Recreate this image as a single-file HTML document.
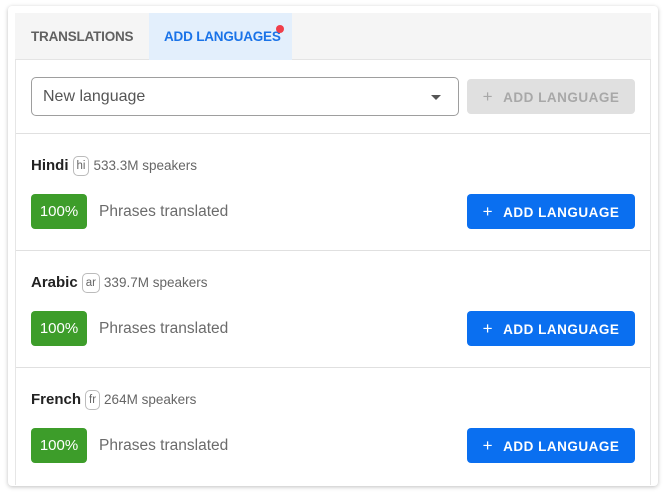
<!DOCTYPE html>
<html><head><style>
*{box-sizing:border-box;margin:0;padding:0}
body{width:666px;height:495px;background:#fff;font-family:"Liberation Sans",sans-serif;position:relative;overflow:hidden}
.card{position:absolute;left:8px;top:6px;width:650px;height:480px;background:#fff;border-radius:4px;box-shadow:0 1px 4px rgba(0,0,0,.25)}
.inner{position:absolute;left:15px;top:13px;width:636px;height:472px;border-left:1px solid #e6e6e6;border-right:1px solid #e6e6e6}
.tabs{position:absolute;left:-1px;top:0;width:636px;height:47px;background:#f5f5f5;border-bottom:1px solid #e4e4e4}
.tab{position:absolute;top:0;height:47px;line-height:47px;font-size:13.5px;font-weight:bold;letter-spacing:-.2px}
.t1{left:16px;color:#616161}
.t2{left:134px;width:143px;background:#e3effc;color:#1a73e8;padding-left:15px}
.dot{position:absolute;left:261px;top:12px;width:8px;height:8px;border-radius:50%;background:#f03e4a}
.sel{position:absolute;left:15px;top:64px;width:428px;height:39px;border:1px solid #9e9e9e;border-radius:5px;font-size:16px;color:#555;padding-left:11px;line-height:37px}
.arr{position:absolute;right:17px;top:17px;width:0;height:0;border-left:5px solid transparent;border-right:5px solid transparent;border-top:5px solid #555}
.btn{position:absolute;left:451px;width:168px;height:35px;border-radius:4px;font-size:13.5px;font-weight:bold;letter-spacing:.5px;line-height:35px;text-align:center;color:#fff;background:#0a6ff0}
.btn.dis{background:#e0e0e0;color:#a8a8a8;top:66px}
.btn span{font-weight:normal;font-size:17px;margin-right:10px}
.div{position:absolute;left:0;width:100%;height:1px;background:#e0e0e0}
.row{position:absolute;left:0;width:100%;height:117px}
.name{position:absolute;left:15px;top:22px;font-size:15px;font-weight:bold;color:#222}
.code{display:inline-block;border:1px solid #bbb;border-radius:5px;font-size:11.5px;font-weight:normal;color:#666;padding:0 3px;height:20px;line-height:18px;vertical-align:middle;margin:0 4px 0 4px}
.sp{font-size:13.5px;font-weight:normal;color:#666}
.badge{position:absolute;left:15px;top:60px;width:56px;height:35px;background:#3d9d2a;border-radius:4px;color:#fff;font-size:15px;text-align:center;line-height:35px}
.ph{position:absolute;left:83px;top:60px;line-height:35px;font-size:15.5px;color:#6b6b6b}
.row .btn{top:60px}
</style></head><body>
<div class="card"></div>
<div class="inner">
 <div class="tabs">
  <div class="tab t1">TRANSLATIONS</div>
  <div class="tab t2">ADD LANGUAGES</div>
  <div class="dot"></div>
 </div>
 <div class="sel">New language<div class="arr"></div></div>
 <div class="btn dis"><span>+</span>ADD LANGUAGE</div>
 <div class="div" style="top:120px"></div>
 <div class="row" style="top:121px">
  <div class="name">Hindi<span class="code">hi</span><span class="sp">533.3M speakers</span></div>
  <div class="badge">100%</div><div class="ph">Phrases translated</div>
  <div class="btn"><span>+</span>ADD LANGUAGE</div>
 </div>
 <div class="div" style="top:237px"></div>
 <div class="row" style="top:238px">
  <div class="name">Arabic<span class="code">ar</span><span class="sp">339.7M speakers</span></div>
  <div class="badge">100%</div><div class="ph">Phrases translated</div>
  <div class="btn"><span>+</span>ADD LANGUAGE</div>
 </div>
 <div class="div" style="top:354px"></div>
 <div class="row" style="top:355px">
  <div class="name">French<span class="code">fr</span><span class="sp">264M speakers</span></div>
  <div class="badge">100%</div><div class="ph">Phrases translated</div>
  <div class="btn"><span>+</span>ADD LANGUAGE</div>
 </div>
</div>
</body></html>
